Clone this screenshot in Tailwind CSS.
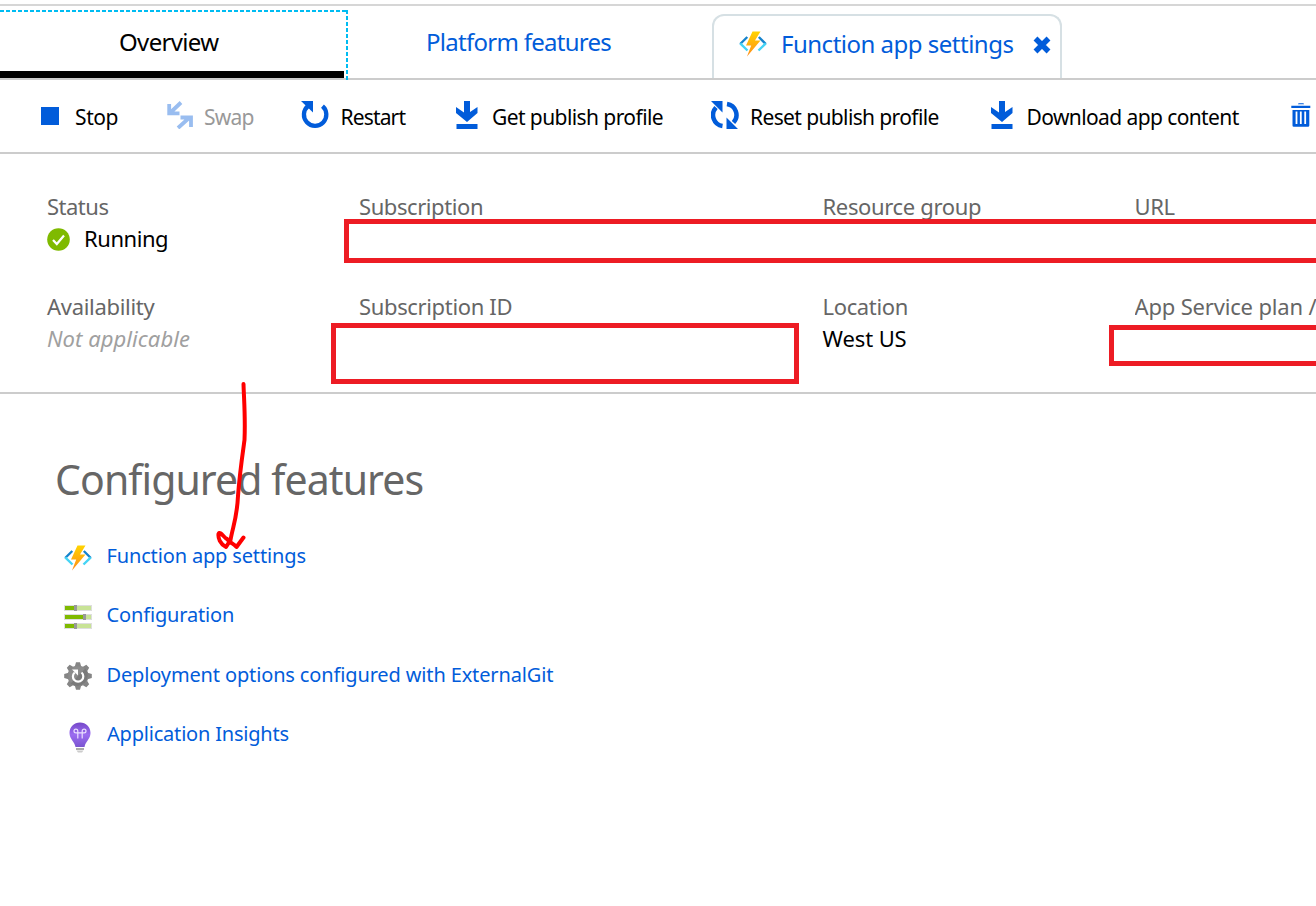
<!DOCTYPE html>
<html lang="en">
<head>
<meta charset="utf-8">
<title>Function app overview</title>
<script src="https://cdn.jsdelivr.net/npm/@tailwindcss/browser@4"></script>
</head>
<body class="relative h-[906px] w-[1316px] overflow-hidden bg-white font-['Noto_Sans','Open_Sans',sans-serif] whitespace-nowrap text-black">
<svg class="absolute h-0 w-0">
  <defs>
    <linearGradient id="bolt" x1="0" y1="0" x2="0" y2="1"><stop offset="0" stop-color="#ffd400"/><stop offset="1" stop-color="#ff8c1a"/></linearGradient>
    <linearGradient id="bulb" x1="0" y1="0" x2="0" y2="1"><stop offset="0" stop-color="#7549c9"/><stop offset=".5" stop-color="#9b6cf0"/><stop offset="1" stop-color="#7a55d0"/></linearGradient>
    <symbol id="fn" viewBox="0 0 28 26">
      <path d="M8.300 6 1.200 13M19.800 6l7 7" fill="none" stroke="#1683cc" stroke-width="2.400"/>
      <path d="M1.200 12.300 8.500 19.500M26.800 12.300 19.500 19.500" fill="none" stroke="#45d4f5" stroke-width="2.400"/>
      <path d="M13.500.5H21.500L16 9.500H21.500L8 25.500 12.200 14.500H7Z" fill="url(#bolt)"/>
    </symbol>
    <symbol id="download" viewBox="0 0 22 28">
      <path d="M8 0h6v11l7.500-5v6L11 21 0 12V6l8 5.500ZM.5 23h21v5H.5Z" fill="#015cda"/>
    </symbol>
  </defs>
</svg>
<div class="h-1.5 border-b-2 border-[#d6d6d6]"></div>
<nav class="flex h-[74px] border-b-2 border-[#ccc] text-[24px] leading-8 text-[#015cda]">
  <div class="relative h-[74px] w-[348px] pt-1">
    <svg class="absolute top-1 left-0 h-[70px] w-[348px]" fill="none" stroke="#00bcf2" stroke-width="2"><path d="M0 1H348" stroke-dasharray="4 2"/><path d="M347 0V70" stroke-dasharray="4 2"/></svg>
    <div class="h-[68px] w-[344px] border-b-[7px] border-black pt-[16px] pl-[119px] tracking-[-0.65px] text-black">Overview</div>
  </div>
  <div class="w-[364px] pt-5 pl-[78px] tracking-[-0.73px]">Platform features</div>
  <div class="mt-2 flex h-16 w-[350px] rounded-t-xl border-2 border-b-0 border-[#d6e0e4] pt-[12px] pl-[25px]">
    <svg class="mt-[3px] h-[26px] w-7"><use href="#fn"/></svg>
    <span class="w-[266px] pl-[14px] tracking-[-0.5px]">Function app settings</span>
    <svg class="mt-[8px] h-[18px] w-[18px]" viewBox="0 0 18 18"><path d="m2.500 2.500 13 13M15.500 2.500l-13 13" stroke="#015cda" stroke-width="5.500"/></svg>
  </div>
</nav>
<div class="flex h-[74px] items-start border-b-2 border-[#ccc] text-[21px] leading-8">
  <svg class="mt-[26.500px] ml-[41px] h-[18px] w-[18px]"><path d="M0 0H18V18H0Z" fill="#015cda"/></svg>
  <div class="mt-[21px] w-[108px] pl-4 tracking-[-0.4px]">Stop</div>
  <svg class="mt-[21px] h-7 w-[27px]" viewBox="0 0 27 28" fill="none" stroke="#99bdf0" stroke-width="3.800"><path d="M14 1.500 3.500 11.500M2.200 3V12.300H12.500M11 27 22 17M13.500 16.500H24V26"/></svg>
  <div class="mt-[21px] w-[107px] pl-[10px] tracking-[-0.8px] text-[#999]">Swap</div>
  <svg class="mt-[21px] h-7 w-7" viewBox="0 0 28 28"><path d="M21.500 5.200A11.200 11.200 0 1 1 7 5" fill="none" stroke="#015cda" stroke-width="4.300"/><path d="M0 0H12V11.500Z" fill="#015cda"/></svg>
  <div class="mt-[21px] w-[127px] pl-[11.500px] tracking-[-0.85px]">Restart</div>
  <svg class="mt-[21px] h-7 w-[22px]"><use href="#download"/></svg>
  <div class="mt-[21px] w-[233px] pl-[14px] tracking-[-0.58px]">Get publish profile</div>
  <svg class="mt-[21px] h-7 w-7" viewBox="0 0 28 28"><path d="M11.500 25A11.100 11.100 0 0 1 5 6.500M16 3A11.100 11.100 0 0 1 22.500 21.500" fill="none" stroke="#015cda" stroke-width="4.500"/><path d="M0 0H11.500V11.500ZM27 28H15.500V16.500Z" fill="#015cda"/></svg>
  <div class="mt-[21px] w-[252px] pl-[11px] tracking-[-0.62px]">Reset publish profile</div>
  <svg class="mt-[21px] h-7 w-[22px]"><use href="#download"/></svg>
  <div class="mt-[21px] w-[278px] pl-[13.500px] tracking-[-0.6px]">Download app content</div>
  <svg class="mt-[23px] h-6 w-5 shrink-0" viewBox="0 0 20 24"><path d="M7 1.200Q7 .3 8 .3h4q1 0 1 .9ZM.3 2.800H19.300V5H.3ZM1.500 7H18.300V22.500q0 1.300-1.300 1.300H2.800q-1.300 0-1.300-1.300Z" fill="#015cda"/><path d="M5.500 8.500V21M9.800 8.500V21M14.200 8.500V21" stroke="#fff" stroke-width="1.800"/></svg>
</div>
<section class="grid h-[240px] grid-cols-[312px_463.5px_312px_181px] grid-rows-[100px_100px] border-b-2 border-[#ccc] pt-[36px] pl-[47px] text-[22px] leading-8 tracking-[-0.35px]">
  <div>
    <div class="tracking-[-0.5px] text-[#666]">Status</div>
    <div class="flex"><svg class="mt-[6px] h-[23px] w-[23px]" viewBox="0 0 23 23"><circle cx="11.500" cy="11.500" r="11.300" fill="#7fba00"/><path d="m6 12 3.800 4L17 7.500" fill="none" stroke="#fff" stroke-width="2.200"/></svg><span class="pl-[14px] tracking-[-0.45px]">Running</span></div>
  </div>
  <div class="tracking-[-0.42px] text-[#666]">Subscription</div>
  <div class="text-[#666]">Resource group</div>
  <div class="text-[#666]">URL</div>
  <div>
    <div class="tracking-[-0.3px] text-[#666]">Availability</div>
    <div class="tracking-[0.06px] text-[#a0a0a0] italic">Not applicable</div>
  </div>
  <div class="text-[#666]">Subscription ID</div>
  <div>
    <div class="text-[#666]">Location</div>
    <div class="tracking-[-0.1px]">West US</div>
  </div>
  <div class="overflow-hidden tracking-[-0.17px] text-[#666]">App Service plan /</div>
</section>
<main class="pt-[60px] pl-[55px]">
  <h1 class="pt-px text-[41px] leading-12 tracking-[-0.92px] text-[#666]">Configured features</h1>
  <div class="mt-[23px] pl-[9px] text-[20px] tracking-[-0.15px] text-[#015cda]">
    <div class="flex h-[59.500px] items-center"><svg class="mt-1 h-[26px] w-7"><use href="#fn"/></svg><span class="pl-[14.500px]">Function app settings</span></div>
    <div class="flex h-[59.500px] items-center"><svg class="mt-1 h-6 w-7" viewBox="0 0 28 24"><path d="M0 0H28V6H0ZM0 9H28V15H0ZM0 18H28V24H0Z" fill="#dedede"/><path d="M1 1H27V5H1ZM1 10H27V14H1ZM1 19H27V23H1Z" fill="#c8e396"/><path d="M1 1H11V5H1ZM1 10H20V14H1ZM1 19H11V23H1Z" fill="#7fba00"/><path d="M10 0h3v6h-3ZM19 9h3v6h-3ZM10 18h3v6h-3Z" fill="#999"/></svg><span class="pl-[14.500px]">Configuration</span></div>
    <div class="flex h-[59.500px] items-center"><svg class="mt-[3px] h-7 w-7" viewBox="-14 -14 28 28"><circle r="10.500" fill="#8c8c8c"/><path id="tooth" d="M-3.200-9.500-2-13.800H2L3.200-9.500ZM-3.200 9.500-2 13.800H2L3.200 9.500ZM-9.500-3.200-13.800-2V2L-9.500 3.200ZM9.500-3.200 13.800-2V2L9.500 3.200Z" fill="#858585"/><use href="#tooth" transform="rotate(45)"/><path d="M-7.400 7.400 7.400-7.400A10.500 10.500 0 0 1-7.400 7.400Z" fill="#7a7a7a"/><path d="M3.500-3.500A5.200 5.200 0 1 1-3.300-3.500" fill="none" stroke="#fff" stroke-width="2.200"/><path d="M-6-6.500H0V-.5Z" fill="#fff"/></svg><span class="pl-[14.500px] tracking-[-0.14px]">Deployment options configured with ExternalGit</span></div>
    <div class="flex h-[59.500px] items-center"><svg class="mt-[6px] ml-[5px] h-[31px] w-[22px]" viewBox="0 0 22 31"><path d="M11 .5C5 .5.5 5 .5 11c0 6 5 8.500 6 14H15.500c1-5.500 6-8 6-14C21.500 5 17 .5 11 .5Z" fill="url(#bulb)"/><path d="M8.800 16.500V9A1.900 1.900 0 1 0 6.900 10.900H15.100A1.900 1.900 0 1 0 13.200 9V16.500" fill="none" stroke="#eadfff" stroke-width="1.200"/><path d="M7 26H15V28H7Z" fill="#aaa"/><path d="M7.500 28.500H14.500L13 30.500H9Z" fill="#ccc"/></svg><span class="pl-4 tracking-[-0.2px]">Application Insights</span></div>
  </div>
</main>
<div class="absolute top-[219px] right-[-5px] left-[344px] h-11 border-5 border-[#ed1c24] bg-white"></div>
<div class="absolute top-[323px] left-[331px] h-[61px] w-[468px] border-5 border-[#ed1c24] bg-white"></div>
<div class="absolute top-[325px] right-[-5px] left-[1109px] h-[41px] border-5 border-[#ed1c24] bg-white"></div>
<svg class="absolute top-[370px] left-[200px] h-[200px] w-20" fill="none" stroke="#f00" stroke-width="4" stroke-linecap="round" stroke-linejoin="round"><path d="M43.500 14C44 30 45.500 48 44.500 70C42 88 39.500 105 38 126C37 148 33 156 30.500 170L26 177C20 174 18 168 18.500 164C20 160 24 168 27 169C30 173 33 173 36.500 177L43.500 167.500"/></svg>
</body>
</html>
